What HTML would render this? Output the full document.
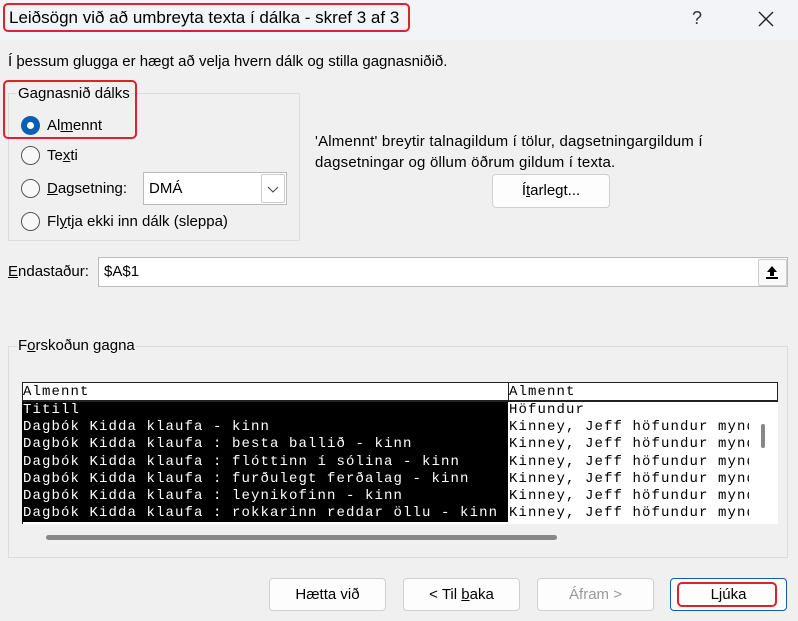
<!DOCTYPE html>
<html><head><meta charset="utf-8"><style>
*{box-sizing:border-box;margin:0;padding:0}
body{width:798px;height:621px;background:#f0f0f0;font-family:"Liberation Sans","DejaVu Sans",sans-serif;font-size:15px;color:#000;position:relative;overflow:hidden}
.a{position:absolute;white-space:nowrap}
.red{position:absolute;border:2px solid #e0202a;border-radius:5px}
.btn{position:absolute;background:#fdfdfd;border:1px solid #d0d0d0;border-radius:4px;text-align:center;font-size:15px}
.rad{position:absolute;width:19px;height:19px;border:1.5px solid #555;border-radius:50%;background:#f8f8f8}
.mono{font-family:"Liberation Mono","DejaVu Sans Mono",monospace;font-size:14px;letter-spacing:1.1px;line-height:17.2px}
</style></head><body>
<div class="a" style="left:0;top:0;width:798px;height:40px;background:#f3f4f8"></div>
<div class="a" style="left:9px;top:8px;font-size:17px">Leiðsögn við að umbreyta texta í dálka - skref 3 af 3</div>
<div class="red" style="left:3px;top:3px;width:407px;height:29px"></div>
<div class="a" style="left:692px;top:8px;font-size:18px;color:#333">?</div>
<svg class="a" style="left:758px;top:11px" width="16" height="16"><path d="M1 1L15 15M15 1L1 15" stroke="#222" stroke-width="1.4"/></svg>
<div class="a" style="left:8px;top:53px">Í þessum glugga er hægt að velja hvern dálk og stilla gagnasniðið.</div>
<div class="a" style="left:8px;top:93px;width:292px;height:148px;border:1px solid #dcdcdc"></div>
<div class="a" style="left:17px;top:85px;background:#f0f0f0;padding:0 1px">Gagnasnið dálks</div>
<div class="rad" style="left:21px;top:116px;border:none;background:#0a5fb4"><div style="position:absolute;left:6px;top:6px;width:7px;height:7px;border-radius:50%;background:#fff"></div></div>
<div class="a" style="left:47px;top:117px">Al<u>m</u>ennt</div>
<div class="red" style="left:3px;top:80px;width:134px;height:59px"></div>
<div class="rad" style="left:21px;top:146px"></div><div class="a" style="left:47px;top:147px">Te<u>x</u>ti</div>
<div class="rad" style="left:21px;top:179px"></div><div class="a" style="left:47px;top:180px"><u>D</u>agsetning:</div>
<div class="a" style="left:143px;top:172px;width:144px;height:33px;background:#fff;border:1px solid #bbb"></div>
<div class="a" style="left:149px;top:180px">DMÁ</div>
<div class="a" style="left:261px;top:174px;width:24px;height:29px;border:1px solid #ccc;border-radius:2px;background:#fff"></div>
<svg class="a" style="left:267px;top:186px" width="12" height="8"><path d="M1 1L6 6L11 1" stroke="#444" fill="none"/></svg>
<div class="rad" style="left:21px;top:212px"></div><div class="a" style="left:47px;top:213px">Fl<u>y</u>tja ekki inn dálk (sleppa)</div>
<div class="a" style="left:315px;top:131px;line-height:21px;letter-spacing:0.2px">'Almennt' breytir talnagildum í tölur, dagsetningargildum í<br>dagsetningar og öllum öðrum gildum í texta.</div>
<div class="btn" style="left:492px;top:174px;width:118px;height:34px;line-height:32px">Í<u>t</u>arlegt...</div>
<div class="a" style="left:8px;top:263px"><u>E</u>ndastaður:</div>
<div class="a" style="left:98px;top:257px;width:690px;height:30px;background:#fff;border:1px solid #bbb"></div>
<div class="a" style="left:104px;top:263px">$A$1</div>
<div class="a" style="left:758px;top:259px;width:29px;height:27px;border:1px solid #ccc;background:#f9f9f9;border-radius:2px"></div>
<svg class="a" style="left:764px;top:264px" width="16" height="16"><path d="M8 2L3 8H6V12H10V8H13Z" fill="#000"/><rect x="2" y="13" width="12" height="2" fill="#000"/></svg>
<div class="a" style="left:8px;top:346px;width:780px;height:212px;border:1px solid #dcdcdc"></div>
<div class="a" style="left:17px;top:337px;background:#f0f0f0;padding:0 1px">F<u>o</u>rskoðun gagna</div>
<div class="a" style="left:22px;top:382px;width:756px;height:142px;background:#fff;border-top:1px solid #222;border-left:1px solid #222;border-right:1px solid #222"></div>
<div class="a" style="left:22px;top:400px;width:756px;height:2px;background:#222"></div>
<div class="a" style="left:508px;top:382px;width:1px;height:19px;background:#222"></div>
<div class="a" style="left:22px;top:402px;width:486px;height:120px;background:#000"></div>
<div class="a mono" style="left:23px;top:384px">Almennt</div>
<div class="a mono" style="left:509px;top:384px">Almennt</div>
<div class="a mono" style="left:23px;top:402px;color:#fff;width:485px;overflow:hidden">Titill<br>Dagbók Kidda klaufa - kinn<br>Dagbók Kidda klaufa : besta ballið - kinn<br>Dagbók Kidda klaufa : flóttinn í sólina - kinn<br>Dagbók Kidda klaufa : furðulegt ferðalag - kinn<br>Dagbók Kidda klaufa : leynikofinn - kinn<br>Dagbók Kidda klaufa : rokkarinn reddar öllu - kinn</div>
<div class="a mono" style="left:509px;top:402px;width:240px;overflow:hidden">Höfundur<br>Kinney, Jeff höfundur mynd<br>Kinney, Jeff höfundur mynd<br>Kinney, Jeff höfundur mynd<br>Kinney, Jeff höfundur mynd<br>Kinney, Jeff höfundur mynd<br>Kinney, Jeff höfundur mynd</div>
<div class="a" style="left:749px;top:402px;width:29px;height:122px;background:#fff"></div>
<div class="a" style="left:761px;top:424px;width:4px;height:24px;background:#888;border-radius:2px"></div>
<div class="a" style="left:46px;top:535px;width:511px;height:5px;background:#888;border-radius:3px"></div>
<div class="btn" style="left:269px;top:578px;width:117px;height:33px;line-height:31px">Hætta við</div>
<div class="btn" style="left:403px;top:578px;width:117px;height:33px;line-height:31px">&lt; Til <u>b</u>aka</div>
<div class="btn" style="left:537px;top:578px;width:117px;height:33px;line-height:31px;color:#999">Áfram &gt;</div>
<div class="btn" style="left:670px;top:578px;width:117px;height:33px;line-height:31px;border:1px solid #0a5fb4">Ljúka</div>
<div class="red" style="left:677px;top:582px;width:100px;height:25px"></div>
</body></html>
